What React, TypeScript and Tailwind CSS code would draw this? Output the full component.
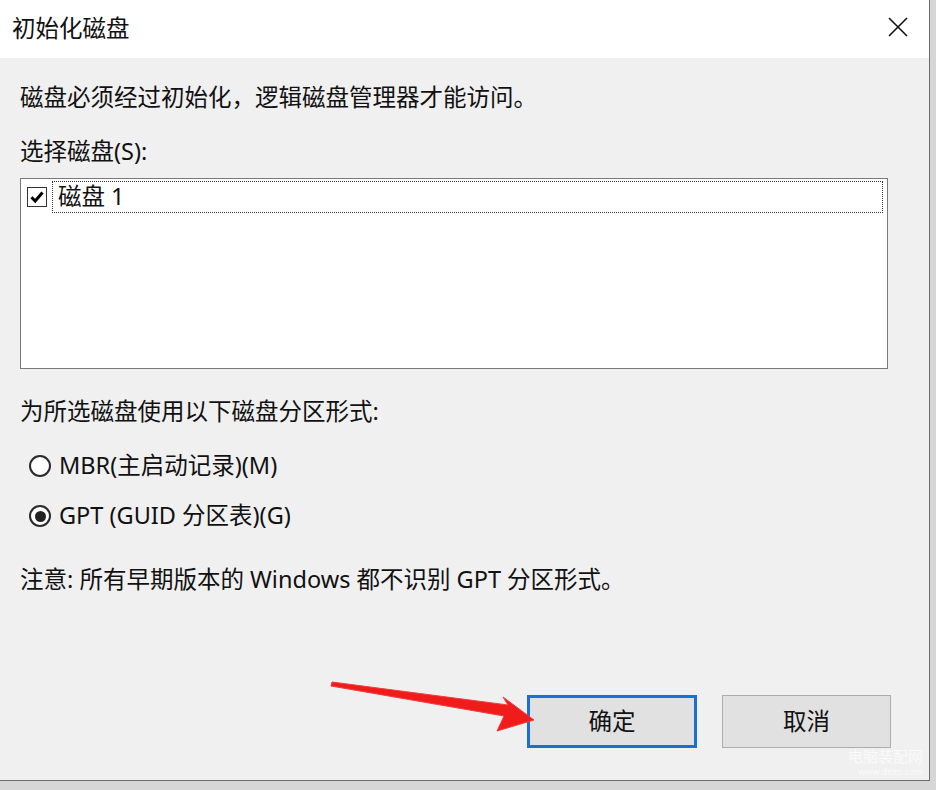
import React from "react";

const FONT = { fontFamily: '"Noto Sans", "Noto Sans CJK SC", sans-serif' };

function CloseIcon() {
  return (
    <svg width="22" height="22" viewBox="0 0 22 22" fill="none" stroke="#111" strokeWidth={1.6}>
      <path d="M2 2 L20 20 M20 2 L2 20" />
    </svg>
  );
}

function Radio({ checked }: { checked?: boolean }) {
  return (
    <span className="flex h-[22px] w-[22px] items-center justify-center rounded-full border-2 border-[#2a2a2a] bg-white">
      {checked && <span className="h-[11px] w-[11px] rounded-full bg-[#222]" />}
    </span>
  );
}

function Arrow() {
  return (
    <svg className="pointer-events-none absolute left-0 top-0" width="936" height="790">
      <polygon
        points="332,682 508,705 503,697 534,720 497,731 504,716 331,686"
        fill="#f01c1c"
        stroke="#f23b3b"
        strokeWidth={1}
        strokeLinejoin="round"
      />
    </svg>
  );
}

export default function App() {
  return (
    <div className="relative h-[790px] w-[936px] overflow-hidden bg-[#d6d6d6] text-[#111]" style={FONT}>
      <div className="flex h-[781px] w-[930px] flex-col border-b border-r border-[#6b6b6b] bg-[#f0f0f0]">
        {/* title bar */}
        <div className="flex h-[58px] items-center justify-between bg-white pl-[12px] pr-[20px]">
          <span className="text-[23.5px] leading-none">初始化磁盘</span>
          <span className="-mt-[4px]">
            <CloseIcon />
          </span>
        </div>

        <div className="flex flex-col pl-[20px] text-[23.5px]">
          <div className="mt-[25px] flex h-[30px] items-center">磁盘必须经过初始化，逻辑磁盘管理器才能访问。</div>
          <div className="mt-[24px] flex h-[30px] items-center">选择磁盘(S):</div>

          {/* disk list */}
          <div className="mt-[11px] h-[191px] w-[868px] border border-[#7a7a7a] bg-white">
            <div className="flex h-[34px] items-center pl-[6px] pr-[4px] pt-[2px]">
              <span className="flex h-[20px] w-[20px] items-center justify-center border border-[#333] bg-white">
                <svg width="16" height="16" viewBox="0 0 16 16" fill="none" stroke="#000" strokeWidth={3}>
                  <path d="M2.5 8.2 L6.2 12 L13.5 3.5" />
                </svg>
              </span>
              <div className="ml-[5px] flex h-[32px] flex-1 items-center border border-dotted border-[#333] pl-[5px]">
                磁盘 1
              </div>
            </div>
          </div>

          <div className="mt-[28px] flex h-[30px] items-center">为所选磁盘使用以下磁盘分区形式:</div>
          <div className="mt-[24px] flex h-[30px] items-center pl-[9px]">
            <Radio />
            <span className="ml-[8px]">MBR(主启动记录)(M)</span>
          </div>
          <div className="mt-[20px] flex h-[30px] items-center pl-[9px]">
            <Radio checked />
            <span className="ml-[8px]">GPT (GUID 分区表)(G)</span>
          </div>
          <div className="mt-[34px] flex h-[30px] items-center">注意: 所有早期版本的 Windows 都不识别 GPT 分区形式。</div>
        </div>

        {/* buttons */}
        <div className="mt-[100px] flex justify-end gap-[25px] pr-[38px] text-[23.5px]">
          <button className="flex h-[53px] w-[170px] items-center justify-center border-[3px] border-[#1a6fcf] bg-[#e1e1e1]">
            确定
          </button>
          <button className="flex h-[53px] w-[169px] items-center justify-center border border-[#adadad] bg-[#e1e1e1]">
            取消
          </button>
        </div>

        <div className="mt-auto flex flex-col items-end gap-[3px] pb-[4px] pr-[6px] text-white/70">
          <span className="text-[15px] leading-[15px]">电脑装配网</span>
          <span className="text-[9px] leading-[9px]">www.dnzp.com</span>
        </div>
      </div>
      <Arrow />
    </div>
  );
}
